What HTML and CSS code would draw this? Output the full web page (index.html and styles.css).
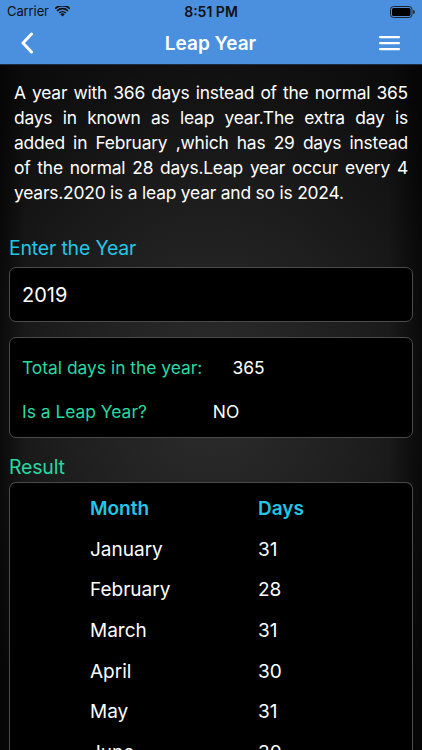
FILE: index.html
```html
<!DOCTYPE html>
<html>
<head>
<meta charset="utf-8">
<link rel="stylesheet" href="styles.css">
</head>
<body>
<div class="screen">
  <div class="status">
    <div class="status-left">
      <span class="carrier">Carrier</span>
      <svg class="wifi" width="15" height="11" viewBox="0 0 15 11">
        <path d="M7.5 10.6 L5.3 8.2 A3.2 3.2 0 0 1 9.7 8.2 Z" fill="#111"/>
        <path d="M3.6 6.5 A5.6 5.6 0 0 1 11.4 6.5 L10.3 7.6 A4.1 4.1 0 0 0 4.7 7.6 Z" fill="#111"/>
        <path d="M1.5 4.3 A8.6 8.6 0 0 1 13.5 4.3 L12.4 5.4 A7.1 7.1 0 0 0 2.6 5.4 Z" fill="#111"/>
        <path d="M-0.5 2.1 A11.4 11.4 0 0 1 15.5 2.1 L14.4 3.2 A9.9 9.9 0 0 0 0.6 3.2 Z" fill="#111"/>
      </svg>
    </div>
    <div class="time">8:51 PM</div>
    <div class="status-right">
      <svg width="25" height="12" viewBox="0 0 25 12">
        <rect x="0.5" y="0.5" width="21.5" height="11" rx="3" fill="none" stroke="#222" stroke-width="1"/>
        <rect x="2" y="2" width="18.5" height="8" rx="1.6" fill="#000"/>
        <path d="M23 4 A2 2 0 0 1 23 8 Z" fill="#333"/>
      </svg>
    </div>
  </div>
  <div class="nav">
    <svg class="back" width="14" height="22" viewBox="0 0 14 22">
      <path d="M11.5 2 L3 11 L11.5 20" fill="none" stroke="#fff" stroke-width="3" stroke-linecap="round" stroke-linejoin="round"/>
    </svg>
    <div class="title">Leap Year</div>
    <svg class="menu" width="21" height="16" viewBox="0 0 21 16">
      <rect x="0" y="1" width="21" height="2.2" rx="1" fill="#fff"/>
      <rect x="0" y="7" width="21" height="2.2" rx="1" fill="#fff"/>
      <rect x="0" y="13" width="21" height="2.2" rx="1" fill="#fff"/>
    </svg>
  </div>
  <div class="content">
    <div class="para">
      <div class="line">A year with 366 days instead of the normal 365</div>
      <div class="line">days in known as leap year.The extra day is</div>
      <div class="line">added in February ,which has 29 days instead</div>
      <div class="line">of the normal 28 days.Leap year occur every 4</div>
      <div class="line last">years.2020 is a leap year and so is 2024.</div>
    </div>
    <div class="label cyan">Enter the Year</div>
    <div class="box input">2019</div>
    <div class="box info">
      <div class="info-row"><span class="key">Total days in the year:</span><span class="val v1">365</span></div>
      <div class="info-row"><span class="key">Is a Leap Year?</span><span class="val v2">NO</span></div>
    </div>
    <div class="label green result-label">Result</div>
    <div class="box table">
      <div class="trow head"><span class="c1">Month</span><span class="c2">Days</span></div>
      <div class="trow"><span class="c1">January</span><span class="c2">31</span></div>
      <div class="trow"><span class="c1">February</span><span class="c2">28</span></div>
      <div class="trow"><span class="c1">March</span><span class="c2">31</span></div>
      <div class="trow"><span class="c1">April</span><span class="c2">30</span></div>
      <div class="trow"><span class="c1">May</span><span class="c2">31</span></div>
      <div class="trow"><span class="c1">June</span><span class="c2">30</span></div>
      <div class="trow"><span class="c1">July</span><span class="c2">31</span></div>
    </div>
  </div>
</div>
</body>
</html>
```
FILE: styles.css
```css
* { box-sizing: border-box; }
html, body { margin: 0; padding: 0; }
body {
  width: 422px;
  height: 750px;
  overflow: hidden;
  font-family: Inter, "Noto Sans", sans-serif;
  background: #000;
}
.screen {
  width: 422px;
  height: 750px;
  overflow: hidden;
  display: flex;
  flex-direction: column;
}
.status {
  height: 22px;
  background: #4a90df;
  display: flex;
  align-items: center;
  justify-content: space-between;
  padding: 0 7px;
  flex: none;
}
.status-left { display: flex; align-items: center; gap: 6px; width: 100px; }
.carrier { font-size: 13px; color: #111; letter-spacing: -0.1px; }
.time { font-size: 14px; font-weight: 600; color: #111; }
.status-right { width: 100px; display: flex; justify-content: flex-end; padding-top: 1px; }
.nav {
  height: 43px;
  background: #4a90df;
  display: flex;
  align-items: center;
  justify-content: space-between;
  padding: 0 22px 0 20px;
  border-bottom: 1px solid #1a2d44;
  flex: none;
}
.title { color: #fff; font-size: 19px; font-weight: 600; margin-left: 8px; }
.content {
  flex: 1;
  min-height: 0;
  background:
    linear-gradient(to right, rgba(0,0,0,0.55) 0%, rgba(0,0,0,0) 6%, rgba(0,0,0,0) 92%, rgba(0,0,0,0.6) 100%),
    radial-gradient(ellipse 75% 55% at 50% 48%, #2d2d2d 0%, #1f1f1f 45%, #0c0c0c 100%);
  padding: 15px 9px 0 9px;
}
.para {
  padding: 0 5px;
  color: #fff;
  font-size: 17.4px;
  line-height: 25px;
  letter-spacing: -0.2px;
}
.line { text-align: justify; text-align-last: justify; white-space: nowrap; }
.line.last { text-align-last: left; }
.label {
  font-size: 19.5px;
  line-height: 24px;
  margin-top: 31px;
  letter-spacing: -0.2px;
}
.cyan { color: #22c6e6; }
.green { color: #26d9a3; }
.box {
  background: #000;
  border: 1px solid #4b4b4b;
  border-radius: 7px;
}
.input {
  margin-top: 7px;
  height: 55px;
  display: flex;
  align-items: center;
  padding-left: 12px;
  color: #fff;
  font-size: 20px;
}
.info {
  margin-top: 15px;
  height: 101px;
  padding: 18px 12px 0 12px;
}
.info-row {
  display: flex;
  align-items: center;
  font-size: 17.4px;
  height: 22px;
  margin-bottom: 22px;
}
.key { color: #26d9a3; }
.val { color: #fff; }
.v1 { margin-left: 30px; }
.v2 { margin-left: 66px; }
.result-label { margin-top: 17px; }
.table {
  margin-top: 3px;
  height: 320px;
  padding-top: 5px;
  border-bottom: none;
  border-bottom-left-radius: 0;
  border-bottom-right-radius: 0;
}
.trow {
  display: flex;
  height: 40.7px;
  align-items: center;
  color: #fff;
  font-size: 19px;
}
.trow .c1 { margin-left: 80px; width: 168px; }
.trow.head { color: #22c6e6; font-weight: 600; }
```
